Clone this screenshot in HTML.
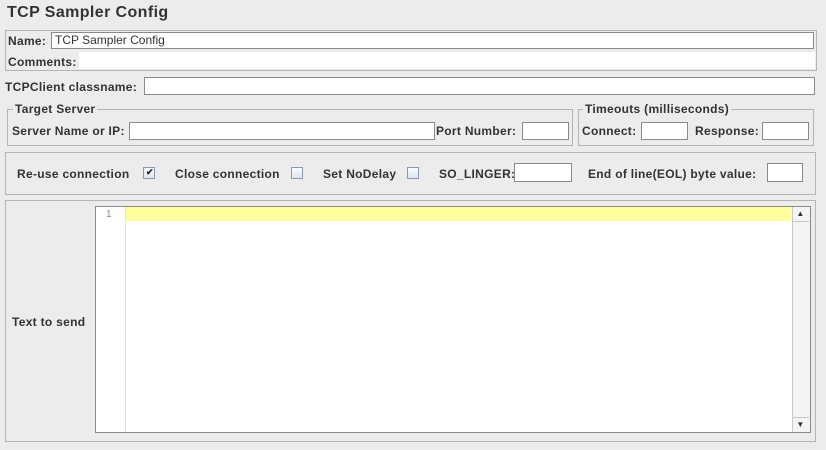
<!DOCTYPE html><html><head><style>
body{margin:0;width:826px;height:450px;background:#ececec;font:bold 12px "Liberation Sans",sans-serif;letter-spacing:0.3px;color:#333;position:relative;overflow:hidden}
.a{position:absolute}
.f{position:absolute;background:#fff;border:1px solid #8a8a8a;box-sizing:border-box}
.g{position:absolute;border:1px solid #b5b5b5;box-sizing:border-box}
.cb{position:absolute;width:12px;height:12px;border:1px solid #8a9ab0;background:linear-gradient(#fafcff,#dde5ef);box-sizing:border-box}
.t{position:absolute;background:#ececec;padding:0 2px;line-height:12px}
</style></head><body>
<div class="a" style="left:7px;top:4px;font-size:16px;letter-spacing:0.4px">TCP Sampler Config</div>
<div class="g" style="left:5px;top:30px;width:812px;height:41px"></div>
<div class="a" style="left:8px;top:34px">Name:</div>
<div class="f" style="left:51px;top:32px;width:763px;height:17px;font-weight:normal;font-size:12px;letter-spacing:0;padding-left:3px;line-height:15px">TCP Sampler Config</div>
<div class="a" style="left:8px;top:55px">Comments:</div>
<div class="a" style="left:79px;top:52px;width:736px;height:17px;background:#fff"></div>
<div class="a" style="left:5px;top:80px">TCPClient classname:</div>
<div class="f" style="left:144px;top:77px;width:671px;height:18px"></div>
<div class="g" style="left:7px;top:109px;width:566px;height:37px"></div>
<div class="t" style="left:13px;top:103px">Target Server</div>
<div class="a" style="left:12px;top:124px">Server Name or IP:</div>
<div class="f" style="left:129px;top:122px;width:306px;height:18px"></div>
<div class="a" style="left:436px;top:124px">Port Number:</div>
<div class="f" style="left:522px;top:122px;width:47px;height:18px"></div>
<div class="g" style="left:578px;top:109px;width:236px;height:37px"></div>
<div class="t" style="left:583px;top:103px">Timeouts (milliseconds)</div>
<div class="a" style="left:582px;top:124px">Connect:</div>
<div class="f" style="left:641px;top:122px;width:47px;height:18px"></div>
<div class="a" style="left:695px;top:124px">Response:</div>
<div class="f" style="left:762px;top:122px;width:47px;height:18px"></div>
<div class="g" style="left:5px;top:152px;width:811px;height:43px"></div>
<div class="a" style="left:17px;top:167px">Re-use connection</div>
<div class="cb" style="left:143px;top:167px"><span style="position:absolute;left:2px;top:-1px;font-size:9px;color:#222">✔</span></div>
<div class="a" style="left:175px;top:167px">Close connection</div>
<div class="cb" style="left:291px;top:167px"></div>
<div class="a" style="left:323px;top:167px">Set NoDelay</div>
<div class="cb" style="left:407px;top:167px"></div>
<div class="a" style="left:439px;top:167px">SO_LINGER:</div>
<div class="f" style="left:514px;top:163px;width:58px;height:19px"></div>
<div class="a" style="left:588px;top:167px">End of line(EOL) byte value:</div>
<div class="f" style="left:767px;top:163px;width:36px;height:19px"></div>
<div class="g" style="left:5px;top:200px;width:811px;height:242px"></div>
<div class="a" style="left:12px;top:315px">Text to send</div>
<div class="f" style="left:95px;top:206px;width:716px;height:227px"></div>
<div class="a" style="left:96px;top:207px;width:29px;height:225px;background:#fff;border-right:1px solid #e4e4e4"></div>
<div class="a" style="left:106px;top:209px;font-weight:normal;font-size:10px;color:#888">1</div>
<div class="a" style="left:126px;top:207px;width:666px;height:14px;background:#ffff9e"></div>
<div class="a" style="left:792px;top:207px;width:17px;height:225px;background:#f4f4f4;border-left:1px solid #c8c8c8"></div>
<div class="a" style="left:792px;top:207px;width:17px;height:14px;border-bottom:1px solid #c8c8c8;font-size:8px;text-align:center;line-height:14px">▲</div>
<div class="a" style="left:792px;top:417px;width:17px;height:14px;border-top:1px solid #c8c8c8;font-size:8px;text-align:center;line-height:14px">▼</div>
</body></html>
